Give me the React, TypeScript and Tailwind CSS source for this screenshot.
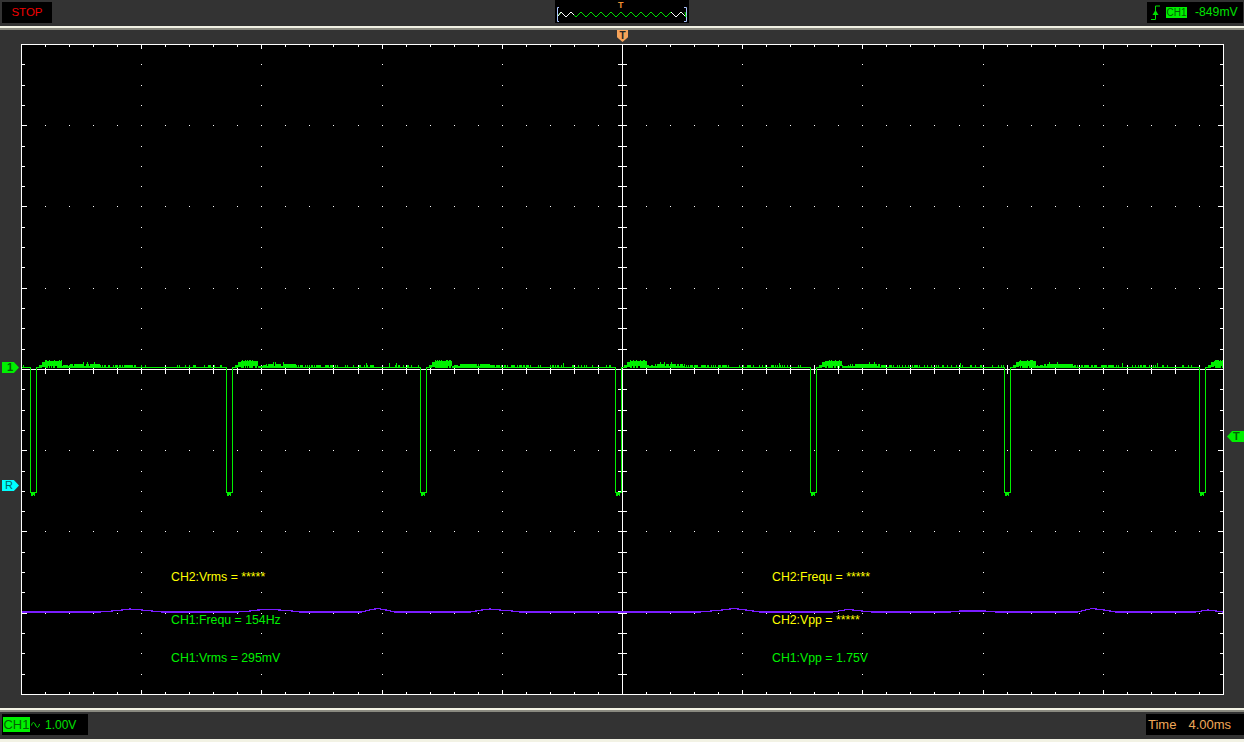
const SCOPE_FONT = "font-['Liberation_Sans',Arial,sans-serif]";

const SPIKES = [30, 226, 420, 615, 810, 1004, 1199];
const MINOR_X = Array.from({ length: 49 }, (_, i) => 45 + i * 24.04);
const MINOR_Y = Array.from({ length: 31 }, (_, i) => 64.3 + i * 20.31);

const px = (n: number) => Math.round(n) + 0.5;

// cheap repeatable noise so the trace looks the same on every render
function noise(n: number) {
  const v = Math.sin(n * 127.1 + 311.7) * 43758.5453;
  return v - Math.floor(v);
}

function buildTrace() {
  let d = "";
  for (let x = 22; x < 1223; x++) {
    const start = SPIKES.filter((s) => s <= x).pop() ?? SPIKES[0] - 195;
    const o = x - start;
    if (o <= 6) continue;
    let top = 367;
    let bottom = 368;
    const r = noise(x);
    if (o < 9) {
      top = 367;
    } else if (o < 12) {
      top = 365;
      bottom = 368;
    } else if (o < 15) {
      top = 362;
      bottom = 367;
    } else if (o < 32) {
      top = r > 0.6 ? 360 : 361;
      bottom = r > 0.25 ? 368 : 366;
    } else if (o < 40) {
      top = r > 0.5 ? 365 : 366;
    } else if (o < 70) {
      top = r > 0.1 ? 364 : 366;
      if (r > 0.93) top = 362;
    } else if (o < 110) {
      top = r > 0.35 ? 365 : 367;
    } else {
      top = r > 0.985 ? 363 : r > 0.75 ? 365 : 367;
    }
    d += `M${x + 0.5} ${top}V${bottom}`;
  }
  return d;
}

function buildSpikes() {
  return SPIKES.map(
    (s) => `M${s - 1} 367.5H${s + 0.5}V492.5H${s + 6.5}V367.5H${s + 8}M${s + 1.5} 493V496M${s + 2.5} 493V496M${s + 4.5} 493V496M${s + 3.5} 493V495`,
  ).join("");
}

const PURPLE: [number, number][] = [
  [22, 612], [100, 612], [112, 611], [122, 610], [130, 609], [142, 610], [152, 611], [162, 612], [238, 612], [250, 611],
  [258, 610], [268, 609.5], [280, 610], [292, 611], [300, 612], [362, 612], [372, 609.5], [378, 608.5], [386, 610],
  [394, 612], [470, 612], [482, 610], [490, 609], [500, 610], [512, 611], [520, 612], [622, 612], [700, 612], [722, 610],
  [734, 608.5], [746, 610], [760, 612], [832, 612], [848, 609.5], [862, 611], [872, 612], [950, 612], [960, 611],
  [985, 611], [996, 612], [1078, 612], [1092, 608.5], [1104, 610], [1116, 612], [1195, 612], [1208, 610], [1216, 611], [1223, 612],
];

function Graticule() {
  const lines: string[] = [];
  const dots: string[] = [];
  MINOR_X.forEach((x, i) => {
    const major = (i + 1) % 5 === 0;
    const len = major ? 4 : 2;
    lines.push(`M${px(x)} 45V${45 + len}M${px(x)} 694V${694 - len}`);
    if (Math.abs(x - 622) > 3) lines.push(`M${px(x)} 365V374`);
    if (major) MINOR_Y.forEach((y) => dots.push(`M${px(x)} ${Math.round(y)}v1`));
  });
  MINOR_Y.forEach((y, i) => {
    const major = (i + 1) % 4 === 0;
    const len = major ? 5 : 3;
    const yy = px(y);
    lines.push(`M22 ${yy}H${22 + len}M1223 ${yy}H${1223 - len}`);
    if (Math.abs(y - 369) > 3) lines.push(`M618 ${yy}H627`);
    if (major) MINOR_X.forEach((x) => dots.push(`M${Math.round(x)} ${yy}h1`));
  });
  return (
    <>
      <path d={dots.join("")} stroke="#ffffff" strokeWidth={1} />
      <path d={lines.join("")} stroke="#ffffff" strokeWidth={1} />
      <path d="M22 369.5H1223M622.5 45V694" stroke="#ffffff" strokeWidth={1} />
    </>
  );
}

function ScopeScreen() {
  return (
    <svg viewBox="22 45 1201 649" className="block h-[649px] w-[1201px]" shapeRendering="crispEdges" fill="none">
      <Graticule />
      <polyline points={PURPLE.map((p) => p.join(",")).join(" ")} stroke="#7a1cff" strokeWidth={1.2} />
      <path d={buildTrace()} stroke="#00f000" strokeWidth={1} />
      <path d={buildSpikes()} stroke="#00f000" strokeWidth={1} />
    </svg>
  );
}

function Rule({ className }: { className: string }) {
  return (
    <div className={"flex w-full flex-col " + className}>
      <div className="h-[2px] bg-[#f2f2e4]" />
      <div className="h-[2px] bg-[#8a8a80]" />
    </div>
  );
}

function MiniWave() {
  const pts: string[] = [];
  for (let i = 0; i < 13; i++) {
    pts.push(`${561 + i * 10},12 ${566 + i * 10},17`);
  }
  return (
    <svg viewBox="555 0 134 23" className="absolute inset-0 h-[23px] w-[134px]" fill="none">
      <path d="M559 7.5H557.5V21.5H559M684 7.5H686.5V21.5H684" stroke="#aac4ff" strokeWidth={1} />
      <polyline points={`558,16 ${pts.join(" ")} 685,12`} stroke="#00e000" strokeWidth={1} />
      <path d="M558 16L561 12L566 17L571 12L574 15" stroke="#ffffff" strokeWidth={1} />
      <path d="M671 12L676 17L681 12L685 16" stroke="#ffffff" strokeWidth={1} />
    </svg>
  );
}

export default function App() {
  return (
    <div className={`relative h-[742px] w-[1244px] overflow-hidden bg-[#333333] ${SCOPE_FONT}`}>
      <header className="flex h-[26px] items-start pl-[2px] pr-px pt-[2px]">
        <div className="flex h-[21px] w-[50px] items-center justify-center bg-black text-[11.5px] text-[#f00000]">STOP</div>
        <div className="relative -mt-[2px] ml-[503px] h-[23px] w-[134px] bg-black">
          <MiniWave />
          <span className="absolute left-[63px] top-0 text-[9px] leading-[10px] font-bold text-[#f09030]">T</span>
        </div>
        <div className="ml-auto flex h-[21px] w-[96px] items-center bg-black pl-[4px]">
          <svg viewBox="0 0 10 16" className="h-[16px] w-[10px]" fill="none">
            <path d="M0 14.5H4.5V1H9" stroke="#00e000" strokeWidth={1} />
            <path d="M4.5 5L1.5 10H7.5Z" fill="#00e000" />
          </svg>
          <span className="ml-[5px] flex h-[11px] w-[21px] items-center justify-center bg-[#00f000] text-[10px] text-[#045f04]">CH1</span>
          <span className="ml-2 text-[12.2px] text-[#00e000]">-849mV</span>
        </div>
      </header>
      <Rule className="h-[4px]" />

      <main className="relative pl-[21px] pt-[14px]">
        <div className="h-[651px] w-[1203px] border border-white bg-black">
          <ScopeScreen />
        </div>

        <div className="absolute left-[617px] top-0 flex h-[12px] w-[11px] justify-center bg-[#f5a35a] text-[10px] leading-[11px] font-bold text-[#222222] [clip-path:polygon(0_0,100%_0,100%_60%,50%_100%,0_60%)]">T</div>
        <div className="absolute left-[2px] top-[332px] h-[11px] w-[17px] bg-[#00f000] pl-[5px] text-[11px] leading-[11px] font-bold text-[#045f04] [clip-path:polygon(0_0,70%_0,100%_50%,70%_100%,0_100%)]">1</div>
        <div className="absolute left-[2px] top-[450px] h-[11px] w-[17px] bg-[#00ffff] pl-[3px] text-[11px] leading-[11px] text-[#045f5f] [clip-path:polygon(0_0,70%_0,100%_50%,70%_100%,0_100%)]">R</div>
        <div className="absolute left-[1227px] top-[401px] h-[11px] w-[17px] bg-[#00f000] pl-[6px] text-[11px] leading-[11px] font-bold text-[#045f04] [clip-path:polygon(30%_0,100%_0,100%_100%,30%_100%,0_50%)]">T</div>

        <span className="absolute left-[171px] top-[540px] text-[12.3px] leading-[14px] text-[#ffff00]">CH2:Vrms = *****</span>
        <span className="absolute left-[171px] top-[583px] text-[12.3px] leading-[14px] text-[#00f000]">CH1:Frequ = 154Hz</span>
        <span className="absolute left-[171px] top-[621px] text-[12.3px] leading-[14px] text-[#00f000]">CH1:Vrms = 295mV</span>
        <span className="absolute left-[772px] top-[540px] text-[12.3px] leading-[14px] text-[#ffff00]">CH2:Frequ = *****</span>
        <span className="absolute left-[772px] top-[583px] text-[12.3px] leading-[14px] text-[#ffff00]">CH2:Vpp = *****</span>
        <span className="absolute left-[772px] top-[621px] text-[12.3px] leading-[14px] text-[#00f000]">CH1:Vpp = 1.75V</span>
      </main>

      <Rule className="mt-[13px] h-[4px]" />
      <footer className="flex h-[27px] items-start justify-between pl-[2px] pt-[2px]">
        <div className="flex h-[21px] w-[86px] items-center bg-black pl-px text-[12px] text-[#00e000]">
          <span className="flex h-[15px] w-[27px] items-center justify-center bg-[#00f000] text-[13px] text-[#045f04]">CH1</span>
          <svg viewBox="0 0 9 6" className="ml-px h-[6px] w-[9px]" fill="none">
            <path d="M0.5 3.5C1.5 -0.5 3 -0.5 4.5 3C6 6.5 7.5 6 8.5 2" stroke="#00e000" strokeWidth={1} />
          </svg>
          <span className="ml-[5px]">1.00V</span>
        </div>
        <div className="flex h-[21px] w-[98px] items-center bg-black pl-[2px] text-[13px] text-[#f0a858]">
          <span>Time</span>
          <span className="ml-[12px]">4.00ms</span>
        </div>
      </footer>
      <div className="h-[3px] bg-[#f2f2e4]" />
    </div>
  );
}
